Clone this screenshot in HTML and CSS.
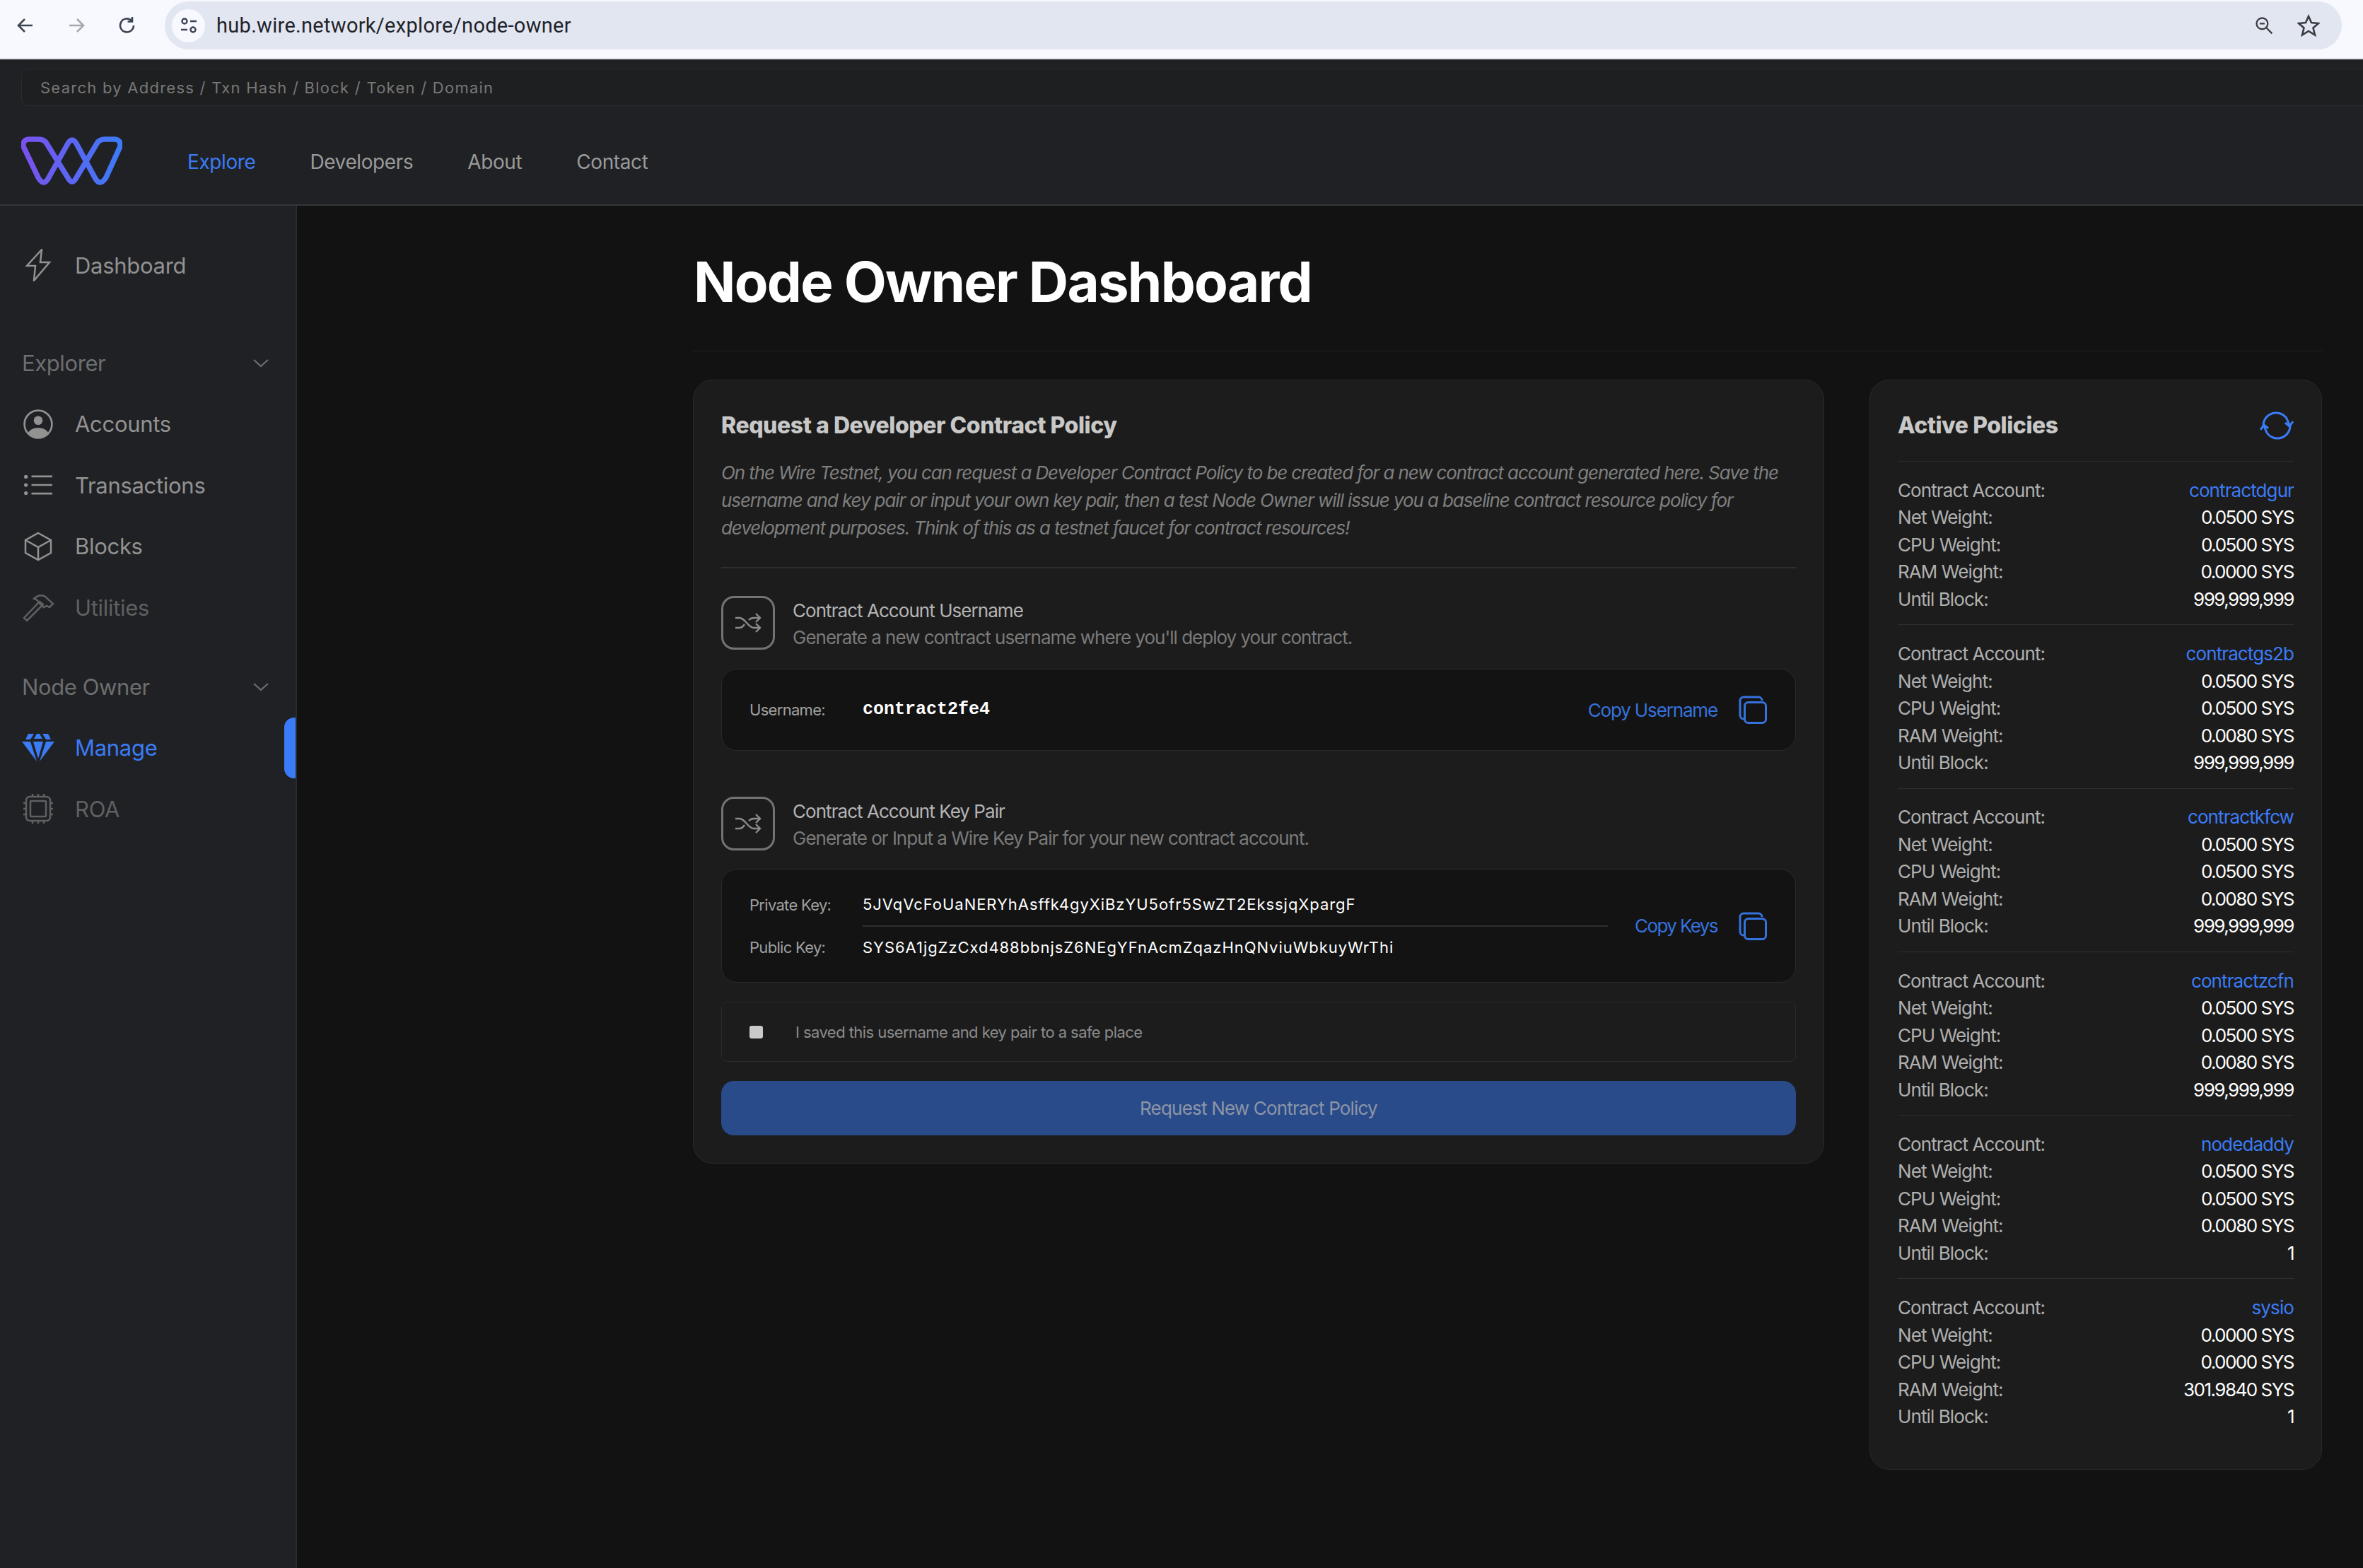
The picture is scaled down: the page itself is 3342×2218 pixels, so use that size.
FILE: index.html
```html
<!DOCTYPE html>
<html lang="en">
<head>
<meta charset="UTF-8">
<title>Node Owner Dashboard</title>
<link rel="stylesheet" href="styles.css">
</head>
<body>
    <!-- browser toolbar -->
    <div class="chrome">
        <svg class="chrome-icon" viewBox="0 0 32 32"><path d="M26 16H7M15 7l-9 9 9 9"/></svg>
        <svg class="chrome-icon faded" viewBox="0 0 32 32"><path d="M6 16h19M17 7l9 9-9 9"/></svg>
        <svg class="chrome-icon" viewBox="0 0 32 32"><path d="M25 16a9.500 9.500 0 1 1-3-7M23 4v6.500h-6.500"/></svg>
        <div class="address">
            <span class="site-info">
                <svg viewBox="0 0 28 28"><circle cx="8" cy="8" r="3.500"/><path d="M16 8h9M3 20h9"/><circle cx="20" cy="20" r="3.500"/></svg>
            </span>
            <span class="url">hub.wire.network/explore/node-owner</span>
            <svg class="chrome-icon small" viewBox="0 0 32 32"><circle cx="13" cy="13" r="9"/><path d="M9 13h8M20 20l9 9"/></svg>
            <svg class="chrome-icon small star" viewBox="0 0 32 32"><path d="M16 3l4 9 10 1-7.500 6.500 2.500 10-9-5.500-9 5.500 2.500-10L2 13l10-1z"/></svg>
        </div>
    </div>

    <header class="topbar">
        <div class="search">Search by Address / Txn Hash / Block / Token / Domain</div>
        <nav class="nav">
            <svg class="logo" viewBox="0 0 143 70">
                <defs>
                    <linearGradient id="wireGrad" x1="0" y1="0" x2="1" y2="0">
                        <stop offset="0" stop-color="#7a52ee"/>
                        <stop offset="1" stop-color="#3b7bf6"/>
                    </linearGradient>
                </defs>
                <path d="M3 14Q2 4 12 4H24Q33 4 36 10L67 60Q72 68 77 60L107 10Q110 4 119 4H131Q141 4 140 14L120 58Q111 72 104 58L78 10Q72 0 66 10L39 58Q32 72 24 58Z"/>
            </svg>
            <a class="nav-link active">Explore</a>
            <a class="nav-link">Developers</a>
            <a class="nav-link">About</a>
            <a class="nav-link">Contact</a>
        </nav>
    </header>

    <div class="layout">
        <aside class="sidebar">
            <a class="side-item first">
                <svg class="bolt" viewBox="0 0 34 46"><path d="M22 1L1 24H13L11 45L33 19H20Z"/></svg>
                Dashboard
            </a>
            <div class="side-group">Explorer
                <svg viewBox="0 0 22 12"><path d="M1 1l10 9 10-9"/></svg>
            </div>
            <a class="side-item">
                <svg viewBox="0 0 40 40"><circle cx="20" cy="20" r="18.500"/><circle class="fill" cx="20" cy="15" r="6"/><path class="fill" d="M6 32c4-6 9-7 14-7s10 1 14 7c-4 4-9 6-14 6s-10-2-14-6z"/></svg>
                Accounts
            </a>
            <a class="side-item">
                <svg viewBox="0 0 40 40"><circle class="fill" cx="3.500" cy="9" r="2.500"/><circle class="fill" cx="3.500" cy="20" r="2.500"/><circle class="fill" cx="3.500" cy="31" r="2.500"/><path d="M11 8.500h28M11 20h28M11 31.500h28"/></svg>
                Transactions
            </a>
            <a class="side-item">
                <svg viewBox="0 0 40 42"><path d="M20 2l18 10v18L20 40 2 30V12zM2 12l18 10 18-10M20 22v18"/></svg>
                Blocks
            </a>
            <a class="side-item disabled">
                <svg viewBox="0 0 46 42"><path d="M3 36l22-23 5 4L7 40zM18 8c6-5 13-5 17 0l9 8-5 5-4-2-4 2-8-7c-1-4-3-5-7-5z"/></svg>
                Utilities
            </a>
            <div class="side-group second">Node Owner
                <svg viewBox="0 0 22 12"><path d="M1 1l10 9 10-9"/></svg>
            </div>
            <a class="side-item current">
                <svg class="solid" viewBox="0 0 46 42"><path d="M9 1h8l-5 8H5zM21 1h4l4 7H17zM29 1h8l4 8h-7zM0 12h12l9 28zM16 12h14l-7 24zM34 12h12L25 40z"/></svg>
                Manage
                <span class="marker"></span>
            </a>
            <a class="side-item disabled">
                <svg viewBox="0 0 42 42"><rect x="4" y="4" width="34" height="34" rx="5"/><rect x="10" y="10" width="22" height="22" rx="1"/><path d="M13 0v4M21 0v4M29 0v4M13 38v4M21 38v4M29 38v4M0 13h4M0 21h4M0 29h4M38 13h4M38 21h4M38 29h4"/></svg>
                ROA
            </a>
        </aside>

        <main class="content">
            <h1 class="page-title">Node Owner Dashboard</h1>
            <div class="panels">
                <section class="panel request">
                    <h2 class="panel-title">Request a Developer Contract Policy</h2>
                    <p class="intro">On the Wire Testnet, you can request a Developer Contract Policy to be created for a new contract account generated here. Save the username and key pair or input your own key pair, then a test Node Owner will issue you a baseline contract resource policy for development purposes. Think of this as a testnet faucet for contract resources!</p>
                    <hr class="rule">

                    <div class="step">
                        <span class="step-icon">
                            <svg viewBox="0 0 38 28"><path d="M1 7h6c8 0 12 14 20 14h8M1 21h6c3 0 5-2 7-5M20 10c2-2 4-3 7-3h8M30 1l6 6-6 6M30 15l6 6-6 6"/></svg>
                        </span>
                        <div>
                            <div class="step-title">Contract Account Username</div>
                            <div class="step-sub">Generate a new contract username where you'll deploy your contract.</div>
                        </div>
                    </div>
                    <div class="well username">
                        <span class="well-label">Username:</span>
                        <span class="mono">contract2fe4</span>
                        <a class="copy">Copy Username
                            <svg viewBox="0 0 40 40"><path d="M7 33a5 5 0 0 1-5-5V7a5 5 0 0 1 5-5h21a5 5 0 0 1 5 5"/><rect x="8.500" y="9.500" width="30" height="29" rx="5"/></svg>
                        </a>
                    </div>

                    <div class="step second">
                        <span class="step-icon">
                            <svg viewBox="0 0 38 28"><path d="M1 7h6c8 0 12 14 20 14h8M1 21h6c3 0 5-2 7-5M20 10c2-2 4-3 7-3h8M30 1l6 6-6 6M30 15l6 6-6 6"/></svg>
                        </span>
                        <div>
                            <div class="step-title">Contract Account Key Pair</div>
                            <div class="step-sub">Generate or Input a Wire Key Pair for your new contract account.</div>
                        </div>
                    </div>
                    <div class="well keys">
                        <div class="key-rows">
                            <div class="key-row">
                                <span class="well-label">Private Key:</span>
                                <span class="key-value lined">5JVqVcFoUaNERYhAsffk4gyXiBzYU5ofr5SwZT2EkssjqXpargF</span>
                            </div>
                            <div class="key-row">
                                <span class="well-label">Public Key:</span>
                                <span class="key-value">SYS6A1jgZzCxd488bbnjsZ6NEgYFnAcmZqazHnQNviuWbkuyWrThi</span>
                            </div>
                        </div>
                        <a class="copy tight">Copy Keys
                            <svg viewBox="0 0 40 40"><path d="M7 33a5 5 0 0 1-5-5V7a5 5 0 0 1 5-5h21a5 5 0 0 1 5 5"/><rect x="8.500" y="9.500" width="30" height="29" rx="5"/></svg>
                        </a>
                    </div>

                    <label class="saved">
                        <span class="check"></span>
                        I saved this username and key pair to a safe place
                    </label>
                    <button class="submit">Request New Contract Policy</button>
                </section>

                <section class="panel policies">
                    <div class="policies-head">
                        <h2 class="panel-title">Active Policies</h2>
                        <svg viewBox="0 0 48 40"><path d="M5 20A18 18 0 0 1 38 10l4 9M43 20A18 18 0 0 1 10 30l-4-9M1 26l5-7 6 5M47 14l-5 7-6-5"/></svg>
                    </div>

                    <div class="policy">
                        <div class="row"><span>Contract Account:</span><a>contractdgur</a></div>
                        <div class="row"><span>Net Weight:</span><b>0.0500 SYS</b></div>
                        <div class="row"><span>CPU Weight:</span><b>0.0500 SYS</b></div>
                        <div class="row"><span>RAM Weight:</span><b>0.0000 SYS</b></div>
                        <div class="row"><span>Until Block:</span><b>999,999,999</b></div>
                    </div>
                    <div class="policy">
                        <div class="row"><span>Contract Account:</span><a>contractgs2b</a></div>
                        <div class="row"><span>Net Weight:</span><b>0.0500 SYS</b></div>
                        <div class="row"><span>CPU Weight:</span><b>0.0500 SYS</b></div>
                        <div class="row"><span>RAM Weight:</span><b>0.0080 SYS</b></div>
                        <div class="row"><span>Until Block:</span><b>999,999,999</b></div>
                    </div>
                    <div class="policy">
                        <div class="row"><span>Contract Account:</span><a>contractkfcw</a></div>
                        <div class="row"><span>Net Weight:</span><b>0.0500 SYS</b></div>
                        <div class="row"><span>CPU Weight:</span><b>0.0500 SYS</b></div>
                        <div class="row"><span>RAM Weight:</span><b>0.0080 SYS</b></div>
                        <div class="row"><span>Until Block:</span><b>999,999,999</b></div>
                    </div>
                    <div class="policy">
                        <div class="row"><span>Contract Account:</span><a>contractzcfn</a></div>
                        <div class="row"><span>Net Weight:</span><b>0.0500 SYS</b></div>
                        <div class="row"><span>CPU Weight:</span><b>0.0500 SYS</b></div>
                        <div class="row"><span>RAM Weight:</span><b>0.0080 SYS</b></div>
                        <div class="row"><span>Until Block:</span><b>999,999,999</b></div>
                    </div>
                    <div class="policy">
                        <div class="row"><span>Contract Account:</span><a>nodedaddy</a></div>
                        <div class="row"><span>Net Weight:</span><b>0.0500 SYS</b></div>
                        <div class="row"><span>CPU Weight:</span><b>0.0500 SYS</b></div>
                        <div class="row"><span>RAM Weight:</span><b>0.0080 SYS</b></div>
                        <div class="row"><span>Until Block:</span><b>1</b></div>
                    </div>
                    <div class="policy">
                        <div class="row"><span>Contract Account:</span><a>sysio</a></div>
                        <div class="row"><span>Net Weight:</span><b>0.0000 SYS</b></div>
                        <div class="row"><span>CPU Weight:</span><b>0.0000 SYS</b></div>
                        <div class="row"><span>RAM Weight:</span><b>301.9840 SYS</b></div>
                        <div class="row"><span>Until Block:</span><b>1</b></div>
                    </div>
                </section>
            </div>
        </main>
    </div>
</body>
</html>
```

FILE: styles.css
```css
* {
    box-sizing: border-box;
}
html, body {
    height: 100%;
}
body {
    margin: 0;
    display: flex;
    flex-direction: column;
    overflow: hidden;
    background-color: #121212;
    color: #b0b0b0;
    font-family: Inter, "Liberation Sans", sans-serif;
}
svg {
    fill: none;
    stroke: currentColor;
    flex: none;
}

/* browser toolbar */
.chrome {
    height: 84px;
    flex: none;
    display: flex;
    align-items: flex-start;
    padding-left: 20px;
    background-color: #f8f9fe;
    border-bottom: 2px solid #e0e3ec;
    color: #3c4454;
}
.chrome-icon {
    width: 32px;
    height: 32px;
    margin: 20px 40px 0 0;
    stroke-width: 2.6;
}
.chrome-icon.faded {
    color: #a6a8ad;
}
.address {
    width: 3079px;
    height: 68px;
    margin: 2px 0 0 -3px;
    padding-left: 10px;
    display: flex;
    align-items: center;
    background-color: #e1e6f1;
    border-radius: 34px;
}
.site-info {
    width: 47px;
    height: 47px;
    display: flex;
    align-items: center;
    justify-content: center;
    background-color: #f8f9fe;
    border-radius: 50%;
}
.site-info svg {
    width: 28px;
    height: 28px;
    stroke-width: 2.4;
}
.url {
    flex: 1;
    margin-left: 16px;
    font-size: 29px;
    letter-spacing: 0.3px;
    color: #1f2329;
    font-family: Roboto, sans-serif;
}
.chrome-icon.small {
    width: 28px;
    height: 30px;
    margin: 0;
    color: #3a3c40;
}
.chrome-icon.star {
    margin: 0 31px 0 33px;
    width: 32px;
    height: 32px;
}

/* top bar */
.topbar {
    height: 207px;
    flex: none;
    background-color: #202124;
    border-bottom: 2px solid #34363a;
    padding: 13px 0 0 30px;
}
.search {
    height: 53px;
    padding-left: 26px;
    line-height: 53px;
    font-size: 22px;
    letter-spacing: 1.25px;
    color: #777;
    background-color: #1e1f20;
    border: 1px solid #2a2b2d;
    border-right: 0;
    border-radius: 10px 0 0 10px;
}
.nav {
    display: flex;
    align-items: center;
    height: 70px;
    margin-top: 43px;
}
.logo {
    width: 143px;
    height: 70px;
    margin-right: 92px;
    stroke: url(#wireGrad);
    stroke-width: 7.5;
    stroke-linejoin: round;
}
.nav-link {
    margin: 1px 77px 0 0;
    font-size: 28px;
    letter-spacing: -0.4px;
    color: #9a9a9a;
}
.nav-link.active {
    color: #3b7bf6;
}

/* side menu */
.layout {
    flex: 1;
    display: flex;
    min-height: 0;
}
.sidebar {
    width: 420px;
    flex: none;
    background-color: #202124;
    border-right: 2px solid #2a2b2e;
}
.side-item {
    position: relative;
    height: 86.500px;
    padding-left: 31px;
    display: flex;
    align-items: center;
    font-size: 31px;
    letter-spacing: -0.3px;
    color: #929292;
}
.side-item svg {
    width: 46px;
    height: 42px;
    margin-right: 29px;
    stroke-width: 2.500;
}
.side-item svg.bolt {
    height: 46px;
}
.side-item.first {
    margin-top: 41px;
}
.side-item.disabled {
    color: #5f6062;
}
.side-item.current {
    color: #3b7bf6;
}
.side-item .fill {
    fill: currentColor;
    stroke: none;
}
.side-item .solid {
    fill: currentColor;
    stroke: none;
}
.marker {
    position: absolute;
    top: 0;
    right: 0;
    width: 16px;
    height: 86px;
    background-color: #3b7bf6;
    border-radius: 14px 0 0 14px;
}
.side-group {
    height: 86px;
    margin-top: 52px;
    padding: 0 38px 0 31px;
    display: flex;
    align-items: center;
    justify-content: space-between;
    font-size: 31px;
    letter-spacing: -0.4px;
    color: #6d6e6f;
}
.side-group.second {
    margin-top: 26px;
}
.side-group svg {
    width: 22px;
    height: 12px;
    stroke-width: 2.200;
}

/* page */
.content {
    flex: 1;
    padding: 0 58px 0 560px;
}
.page-title {
    height: 206px;
    margin: 0 0 40px;
    padding-left: 1px;
    line-height: 216px;
    font-size: 78px;
    font-weight: 700;
    letter-spacing: -1.75px;
    color: #fff;
    border-bottom: 1px solid #232323;
}
.panels {
    display: flex;
    align-items: flex-start;
    gap: 64px;
}
.panel {
    background-color: #1c1c1c;
    border: 1px solid #2a2a2a;
    border-radius: 28px;
}
.request {
    width: 1600px;
    flex: none;
    padding: 39px 39px 39px;
}
.panel-title {
    margin: 0;
    line-height: 50px;
    font-size: 32px;
    font-weight: 800;
    letter-spacing: -0.45px;
    color: #c8c8c8;
}
.intro {
    margin: 22px 0 36px;
    line-height: 39px;
    font-size: 26px;
    font-style: italic;
    letter-spacing: -1.1px;
    color: #7f7f7f;
}
.rule {
    height: 2px;
    margin: 0 0 39px;
    border: 0;
    background-color: #2e2e2e;
}
.step {
    display: flex;
    gap: 25px;
    height: 76px;
}
.step.second {
    margin-top: 65px;
}
.step-icon {
    width: 76px;
    height: 76px;
    flex: none;
    display: flex;
    align-items: center;
    justify-content: center;
    border: 3px solid #737373;
    border-radius: 18px;
    color: #8c8c8c;
}
.step-icon svg {
    width: 38px;
    height: 28px;
    stroke-width: 2.400;
}
.step-title {
    line-height: 39px;
    margin-top: 1px;
    font-size: 26px;
    letter-spacing: -0.95px;
    color: #b4b4b4;
}
.step-sub {
    line-height: 38px;
    font-size: 26px;
    letter-spacing: -1px;
    color: #7a7a7a;
}
.well {
    margin-top: 27px;
    display: flex;
    align-items: center;
    padding: 0 40px 0 39px;
    background-color: #131313;
    border: 1px solid #2a2a2a;
    border-radius: 22px;
}
.well.username {
    height: 116px;
}
.well.keys {
    height: 161px;
    margin-top: 26px;
}
.well-label {
    width: 160px;
    flex: none;
    font-size: 22px;
    letter-spacing: -0.7px;
    color: #a0a0a0;
}
.mono {
    flex: 1;
    margin-top: -1px;
    font-family: "Liberation Mono", monospace;
    font-weight: 700;
    font-size: 25px;
    color: #fff;
}
.copy {
    display: flex;
    align-items: center;
    gap: 30px;
    font-size: 26px;
    letter-spacing: -1.15px;
    color: #3672de;
}
.copy.tight {
    letter-spacing: -1.6px;
}
.copy svg {
    width: 40px;
    height: 40px;
    stroke-width: 3;
}
.key-rows {
    flex: 1;
    margin-right: 38px;
}
.key-row {
    display: flex;
    align-items: center;
}
.key-value {
    flex: 1;
    height: 60px;
    margin-top: -1px;
    line-height: 60px;
    font-size: 22px;
    letter-spacing: 0.95px;
    color: #fff;
    white-space: nowrap;
}
.key-value.lined {
    height: 62px;
    border-bottom: 2px solid #2e2e2e;
}
.saved {
    height: 85px;
    margin-top: 27px;
    padding-left: 39px;
    display: flex;
    align-items: center;
    font-size: 22px;
    letter-spacing: -0.56px;
    color: #8c8c8c;
    border: 1px solid #2a2a2a;
    border-radius: 8px;
}
.check {
    width: 19px;
    height: 18px;
    margin-right: 46px;
    background-color: #c9c9c9;
    border-radius: 3px;
}
.submit {
    display: block;
    width: 100%;
    height: 77px;
    margin-top: 27px;
    font-family: inherit;
    font-size: 26px;
    letter-spacing: -0.8px;
    color: #8d95a6;
    background-color: #294b8a;
    border: 0;
    border-radius: 18px;
}

/* right column */
.policies {
    width: 640px;
    flex: none;
    padding: 39px 39px 38px;
}
.policies-head {
    display: flex;
    align-items: center;
    justify-content: space-between;
    height: 75px;
    padding-bottom: 25px;
    color: #3b7bf6;
}
.policies-head svg {
    width: 48px;
    height: 40px;
    stroke-width: 3;
}
.policy {
    padding: 21px 0 16.800px;
    border-top: 1px solid #2e2e2e;
}
.row {
    height: 38.500px;
    display: flex;
    align-items: center;
    justify-content: space-between;
    font-size: 26px;
    letter-spacing: -0.9px;
}
.row a {
    color: #3b7bf6;
}
.row b {
    font-weight: 400;
    letter-spacing: -1.5px;
    color: #fff;
}
```
